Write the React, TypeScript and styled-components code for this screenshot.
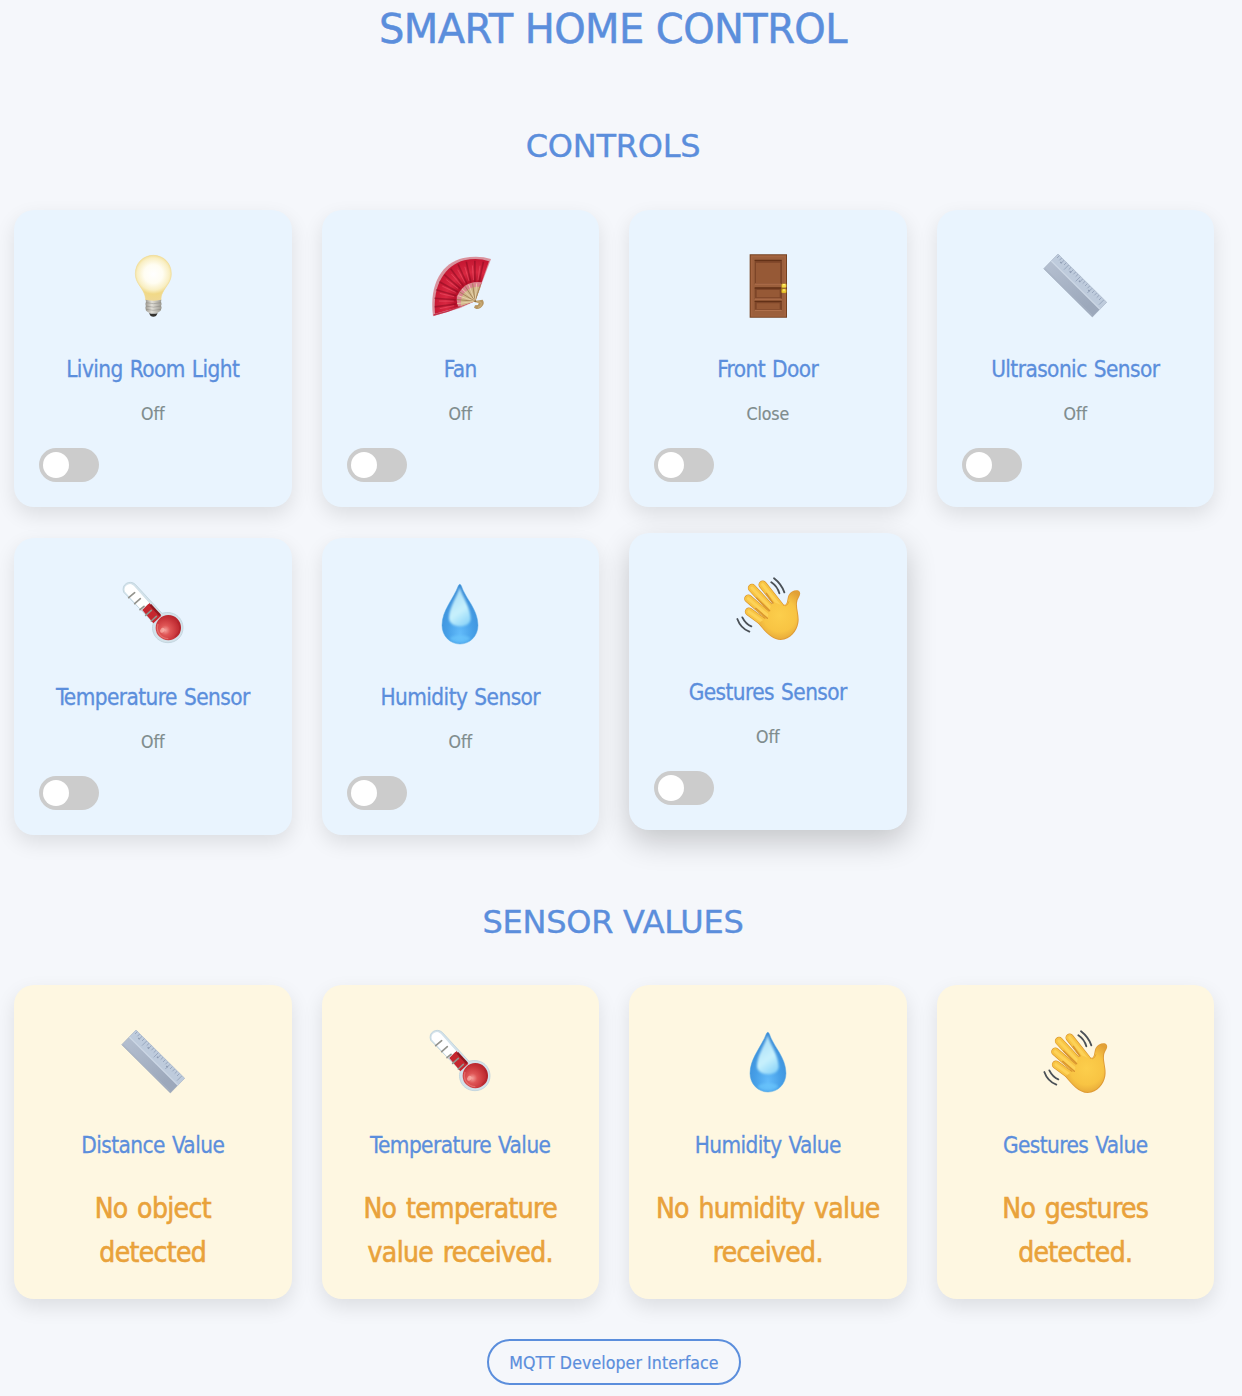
import React from "react";
import styled, { createGlobalStyle, css } from "styled-components";

const GlobalStyle = createGlobalStyle`
  * { box-sizing: border-box; }
  body {
    margin: 0;
    background: #f5f7fb;
    font-family: Tahoma, "DejaVu Sans Condensed", "DejaVu Sans", sans-serif;
    font-stretch: condensed;
    overflow: hidden;
  }
`;

const Page = styled.main`
  width: 1228px;
  padding: 0 14px;
  display: flex;
  flex-direction: column;
  align-items: center;
`;

const heading = css`
  margin: 0;
  color: #5b8edc;
  font-family: "DejaVu Sans", Verdana, sans-serif;
  font-stretch: normal;
  font-weight: 400;
  text-transform: uppercase;
  white-space: nowrap;
`;

const Title = styled.h1`
  ${heading}
  font-size: 40px;
  line-height: 64px;
  letter-spacing: -0.6px;
  -webkit-text-stroke: 0.5px #5b8edc;
  margin-top: -3px;
  padding-right: 2px;
`;

const SectionTitle = styled.h2<{ $top: number }>`
  ${heading}
  font-size: 32px;
  line-height: 51px;
  letter-spacing: -0.25px;
  -webkit-text-stroke: 0.4px #5b8edc;
  margin-top: ${(p) => p.$top}px;
  padding-right: 2px;
`;

const Grid = styled.section<{ $top: number }>`
  width: 100%;
  margin-top: ${(p) => p.$top}px;
  display: grid;
  grid-template-columns: repeat(4, 1fr);
  gap: 30.3px 30px;
`;

const Card = styled.article<{ $tone: "control" | "value"; $raised?: boolean }>`
  display: flex;
  flex-direction: column;
  align-items: center;
  padding: 25px;
  border-radius: 20px;
  background: ${(p) => (p.$tone === "control" ? "#e9f4fe" : "#fef7e1")};
  box-shadow: ${(p) => (p.$raised ? "0 12px 30px rgba(0, 0, 0, 0.2)" : "0 8px 20px rgba(0, 0, 0, 0.1)")};
  transform: ${(p) => (p.$raised ? "translateY(-5px)" : "none")};
`;

const IconBox = styled.div`
  height: 102.4px;
  padding-top: 5.6px;
  margin-bottom: 15.4px;
  svg { display: block; width: 90px; height: 90px; }
`;

const Name = styled.h3`
  margin: 0;
  color: #5b8edc;
  font-size: 22.4px;
  font-weight: 400;
  line-height: 35.8px;
  letter-spacing: -0.56px;
  word-spacing: 1.2px;
  -webkit-text-stroke: 0.3px #5b8edc;
  white-space: nowrap;
`;

const Status = styled.p`
  margin: 12px 0 20px;
  color: #7f8c8d;
  font-size: 17.6px;
  line-height: 28.2px;
  letter-spacing: -0.1px;
  -webkit-text-stroke: 0.2px #7f8c8d;
`;

const Reading = styled.p`
  margin: 23.4px -10px -0.8px;
  color: #e9a23b;
  font-size: 28px;
  line-height: 44px;
  letter-spacing: -0.65px;
  word-spacing: 2.2px;
  -webkit-text-stroke: 0.6px #e9a23b;
  text-align: center;
  white-space: pre-line;
`;

const Switch = styled.button`
  align-self: flex-start;
  display: flex;
  align-items: center;
  width: 60px;
  height: 34px;
  padding: 0 4px;
  border: 0;
  border-radius: 17px;
  background: #ccc;
`;

const Knob = styled.span`
  width: 26px;
  height: 26px;
  border-radius: 50%;
  background: #fff;
`;

const LinkButton = styled.button`
  width: 254px;
  height: 46px;
  margin-top: 40px;
  padding: 1px 0 0;
  border: 2px solid #5b8edc;
  border-radius: 25px;
  background: transparent;
  color: #5b8edc;
  font-family: inherit;
  font-stretch: inherit;
  font-size: 17.6px;
  letter-spacing: 0.08px;
  -webkit-text-stroke: 0.2px #5b8edc;
  white-space: nowrap;
`;

const Bulb = () => (
  <svg viewBox="-7 0 270 270">
    <defs>
      <radialGradient id="glass" gradientUnits="userSpaceOnUse" cx="129" cy="102" r="80">
        <stop offset="0" stopColor="#ffffff" />
        <stop offset=".35" stopColor="#fffdf2" />
        <stop offset=".6" stopColor="#f9efc4" />
        <stop offset=".75" stopColor="#f1d987" />
        <stop offset="1" stopColor="#efd894" />
      </radialGradient>
      <linearGradient id="cap">
        <stop offset="0" stopColor="#9b978e" />
        <stop offset=".4" stopColor="#e1dfd8" />
        <stop offset="1" stopColor="#9b988f" />
      </linearGradient>
    </defs>
    <path d="M129 46C98 46 75 70 75 101c0 27 18 38 26 58 4 9 4 15 5 21q22 6 46 0c0-8 1-15 5-22 9-20 26-31 26-57 0-31-23-55-54-55Z" fill="url(#glass)" stroke="#efd78b" strokeWidth="1.5" />
    <path d="M106 179q23 6 47 0l-1 8 2 5-2 5 2 6-3 9-13 9h-18l-13-9-2-9 2-5-2-6 2-5Z" fill="url(#cap)" />
    <path d="M106 188q24 6 47 0M105 198q25 7 48 0M107 208q22 6 45 0" fill="none" stroke="#77746e" strokeWidth="2" opacity=".55" />
    <path d="M116 220q13 3 26 0l-5 8q-8 5-16 0Z" fill="#34322f" />
  </svg>
);

const ribs = [0, 1, 2, 3, 4, 5, 6, 7, 8, 9];
const foldPoint = (angle: number, radius: number) => {
  const a = (angle * Math.PI) / 180;
  return `${180 + Math.cos(a) * radius} ${184 - Math.sin(a) * radius}`;
};

const Fan = () => (
  <svg viewBox="0 0 270 270">
    <defs>
      <radialGradient id="cloth" gradientUnits="userSpaceOnUse" cx="180" cy="184" r="135">
        <stop offset=".4" stopColor="#b60f29" />
        <stop offset=".65" stopColor="#d92841" />
        <stop offset="1" stopColor="#c0122e" />
      </radialGradient>
    </defs>
    <path d="M180 184 228 57Q191 45 145 54C84 68 41 127 54 229L136 204Z" fill="#d9929d" />
    <path d="M180 184 222 64Q188 52 148 61C92 76 52 132 60 221L136 200Z" fill="url(#cloth)" />
    {ribs.map((i) => {
      const a = 78 + i * 12.2;
      return (
        <g key={i}>
          <path d={`M${foldPoint(a, 58)} L${foldPoint(a, 122)}`} stroke="#83091e" strokeWidth="5" opacity=".5" />
          <path d={`M${foldPoint(a + 4, 64)} L${foldPoint(a + 4, 108)}`} stroke="#f05b70" strokeWidth="3" opacity=".5" />
        </g>
      );
    })}
    <path d="M180 184 201 127q-51-9-75 42-3 12 4 33Z" fill="#da8490" />
    <path d="m181 184 16-43q-40-5-57 31-3 11-2 25Z" fill="#cfb78a" />
    {ribs.map((i) => (
      <path key={i} d={`M${foldPoint(72 + i * 12.8, 54)} L180 184`} stroke={i % 2 ? "#ead5ad" : "#9d7d50"} strokeWidth="2.5" />
    ))}
    <path d="M56 225q40-8 78-25" fill="none" stroke="#c4304a" strokeWidth="4" />
    <path d="m173 184 30-5q6 9 1 17-7 12-20 11l-7-4 3-7 9-1 2-6Z" fill="#b79661" />
    <path d="M185 186q13-2 14 5 0 8-10 11" fill="none" stroke="#c9ab75" strokeWidth="4" />
    <circle cx="181" cy="184" r="3" fill="#8d6d3d" />
  </svg>
);

const Door = () => (
  <svg viewBox="-7 0 270 270">
    <path d="M73 43h112v190H73Z" fill="#75401f" />
    <path d="M76 46h106v184H76Z" fill="#a46440" />
    <path d="M81 52h96v175H81Z" fill="#9b5f3c" />
    <path d="M88 60h81v72H88ZM88 143h81v34H88ZM88 183h81v28H88Z" fill="#7d4528" />
    <path d="M92 68h73v61H92ZM94 150h69v22H94ZM94 190h69v17H94Z" fill="#965936" />
    <path d="M88 61h81M88 144h81M88 184h81" stroke="#633117" strokeWidth="4" />
    <path d="M89 132h80M89 177h80M89 211h80" stroke="#b57551" strokeWidth="3" />
    <path d="M168 62v70M168 145v31M168 185v25" stroke="#7a4328" strokeWidth="3" />
    <path d="M168 134h7v25h-7Z" fill="#9c731a" />
    <rect x="169" y="131" width="14" height="12" rx="3" fill="#f5d746" stroke="#aa821e" />
    <rect x="169" y="147" width="14" height="12" rx="3" fill="#efc931" stroke="#aa821e" />
    <path d="M173 134h6M173 150h6" stroke="#fff189" strokeWidth="3" />
  </svg>
);

const Ruler = () => (
  <svg viewBox="0 0 270 270">
    <defs>
      <linearGradient id="metal" gradientUnits="userSpaceOnUse" x1="72" y1="55" x2="164" y2="205">
        <stop stopColor="#b4bfd0" /><stop offset="1" stopColor="#9ca8bb" />
      </linearGradient>
    </defs>
    <path d="M84 42 230 187 187 231 41 86Z" fill="url(#metal)" stroke="#98a4b6" strokeWidth="1.5" />
    <path d="m84 42 146 145-20 21L64 63Z" fill="#becbdc" />
    <path d="m64 63 146 145" stroke="#ccd7e5" strokeWidth="4" />
    <path d="m45 86 142 141" stroke="#a8b3c4" strokeWidth="3" />
    {Array.from({ length: 20 }, (_, i) => (
      <path key={i} d={`m${88 + i * 7} ${47 + i * 7} ${i % 5 === 4 ? -14 : -7} ${i % 5 === 4 ? 14 : 7}`} stroke="#8796af" strokeWidth="2" />
    ))}
    {[0, 1, 2, 3].map((i) => (
      <path key={i} d={`m${91 + i * 28} ${66 + i * 28} 4 4`} stroke="#8d9bb2" strokeWidth="4" />
    ))}
  </svg>
);

const Thermometer = () => (
  <svg viewBox="0 -3 270 270">
    <defs>
      <radialGradient id="mercury" cx=".38" cy=".6" r=".65">
        <stop offset="0" stopColor="#f4a09b" /><stop offset=".3" stopColor="#df5555" />
        <stop offset=".7" stopColor="#c8353a" /><stop offset="1" stopColor="#b3222a" />
      </radialGradient>
    </defs>
    <path d="M47 70C38 46 65 31 82 46l80 87c34-10 63 12 63 44 0 25-20 44-45 44-32 0-54-29-44-60Z" fill="#d3e2ea" stroke="#bfd2dc" strokeWidth="2.5" />
    <path d="M51 68C44 50 65 39 78 51l46 52-24 20Z" fill="#fff" />
    <path d="m124 102 36 38-24 23-33-40Z" fill="#c5272f" />
    <path d="m127 107 29 32" stroke="#8f1920" strokeWidth="7" />
    <circle cx="181" cy="176" r="38" fill="url(#mercury)" />
    <path d="M150 165c-8 25 10 43 31 44" fill="none" stroke="#ef8a83" strokeWidth="4" opacity=".55" />
    <path d="M209 158q17 25-9 46" fill="none" stroke="#a61d24" strokeWidth="4" opacity=".35" />
    <path d="m62 86 18-15M80 104l17-15M96 122l12-10M113 139l17-15M130 156l15-14" stroke="#93938d" strokeWidth="5" strokeLinecap="round" />
    <path d="M61 50q7-5 14 4l47 50" fill="none" stroke="#fff" strokeWidth="4" opacity=".9" />
    <ellipse cx="163" cy="184" rx="8" ry="6" fill="#ffc0b6" opacity=".6" transform="rotate(-50 163 184)" />
  </svg>
);

const Droplet = () => (
  <svg viewBox="0 -5 270 270">
    <defs>
      <radialGradient id="water" cx=".5" cy=".82" r=".72">
        <stop stopColor="#62bbfa" /><stop offset=".5" stopColor="#469fe7" /><stop offset="1" stopColor="#3b8bd6" />
      </radialGradient>
      <linearGradient id="shine" x1=".3" y1="0" x2=".7" y2="1">
        <stop stopColor="#a6daf5" /><stop offset=".6" stopColor="#c8f1fd" /><stop offset="1" stopColor="#8ed5f8" />
      </linearGradient>
      <filter id="soft"><feGaussianBlur stdDeviation="3" /></filter>
    </defs>
    <path d="M130 48q4-8 9 0c11 37 50 70 50 119 0 33-25 56-54 56s-54-23-54-56c0-46 35-80 49-119Z" fill="url(#water)" stroke="#58aae5" strokeWidth="1.5" />
    <path d="M134 52c-8 30-32 60-32 95 3 30 65 30 65 0 0-32-25-65-33-95Z" fill="url(#shine)" filter="url(#soft)" />
    <ellipse cx="135" cy="207" rx="30" ry="10" fill="#70ccff" opacity=".55" filter="url(#soft)" />
  </svg>
);

const fingers = ["M121 68 172 132", "M89 78 154 148", "M78 110 145 168", "M80 149 140 193"];

const Wave = () => (
  <svg viewBox="2 3 270 270">
    <defs>
      <radialGradient id="skin" gradientUnits="userSpaceOnUse" cx="172" cy="160" r="82">
        <stop stopColor="#fcce4c" /><stop offset=".6" stopColor="#f8c443" /><stop offset="1" stopColor="#e2a136" />
      </radialGradient>
    </defs>
    <path d="M106 182c20 26 44 52 69 52 30-1 49-27 53-51 4-21-6-42-4-61 1-14 14-23 8-33-7-9-26-3-33 10-5 10-3 25-10 29-9 2-17-8-26-17Z" fill="#df9b34" />
    {fingers.map((d) => (
      <g key={d} fill="none" strokeLinecap="round">
        <path d={d} stroke="#d8932f" strokeWidth="25" />
        <path d={d} stroke="#f8c443" strokeWidth="21" />
        <path d={d} stroke="#fdd258" strokeWidth="9" />
      </g>
    ))}
    <path d="M146 130c12-18 26 1 38 1 16-1 12-23 18-32 7-11 22-15 28-9 5 8-8 17-9 31-2 20 8 38 4 61-4 23-22 47-50 49-26 0-48-26-66-48l27-18Z" fill="url(#skin)" />
    <path d="m132 94 20 29M103 108l39 38M100 139l35 30" fill="none" stroke="#d8932f" strokeWidth="4" strokeLinecap="round" />
    <path d="M188 132q9-2 12-14" fill="none" stroke="#d8932f" strokeWidth="3" opacity=".6" />
    <path d="M155 49q22 17 31 42M147 61q18 12 24 33M45 171q10 28 36 38M60 166q10 20 27 27" fill="none" stroke="#4b5157" strokeWidth="5.5" strokeLinecap="round" />
  </svg>
);

type IconType = () => React.JSX.Element;

const controls: { name: string; state: string; Icon: IconType; raised?: boolean }[] = [
  { name: "Living Room Light", state: "Off", Icon: Bulb },
  { name: "Fan", state: "Off", Icon: Fan },
  { name: "Front Door", state: "Close", Icon: Door },
  { name: "Ultrasonic Sensor", state: "Off", Icon: Ruler },
  { name: "Temperature Sensor", state: "Off", Icon: Thermometer },
  { name: "Humidity Sensor", state: "Off", Icon: Droplet },
  { name: "Gestures Sensor", state: "Off", Icon: Wave, raised: true },
];

const values: { name: string; reading: string; Icon: IconType }[] = [
  { name: "Distance Value", reading: "No object\ndetected", Icon: Ruler },
  { name: "Temperature Value", reading: "No temperature\nvalue received.", Icon: Thermometer },
  { name: "Humidity Value", reading: "No humidity value\nreceived.", Icon: Droplet },
  { name: "Gestures Value", reading: "No gestures\ndetected.", Icon: Wave },
];

export default function App() {
  return (
    <>
      <GlobalStyle />
      <Page>
        <Title>Smart Home Control</Title>
        <SectionTitle $top={60}>Controls</SectionTitle>
        <Grid $top={37.6}>
          {controls.map(({ name, state, Icon, raised }) => (
            <Card key={name} $tone="control" $raised={raised}>
              <IconBox><Icon /></IconBox>
              <Name>{name}</Name>
              <Status>{state}</Status>
              <Switch aria-label={name}><Knob /></Switch>
            </Card>
          ))}
        </Grid>
        <SectionTitle $top={61.2}>Sensor Values</SectionTitle>
        <Grid $top={37.4}>
          {values.map(({ name, reading, Icon }) => (
            <Card key={name} $tone="value">
              <IconBox><Icon /></IconBox>
              <Name>{name}</Name>
              <Reading>{reading}</Reading>
            </Card>
          ))}
        </Grid>
        <LinkButton>MQTT Developer Interface</LinkButton>
      </Page>
    </>
  );
}
